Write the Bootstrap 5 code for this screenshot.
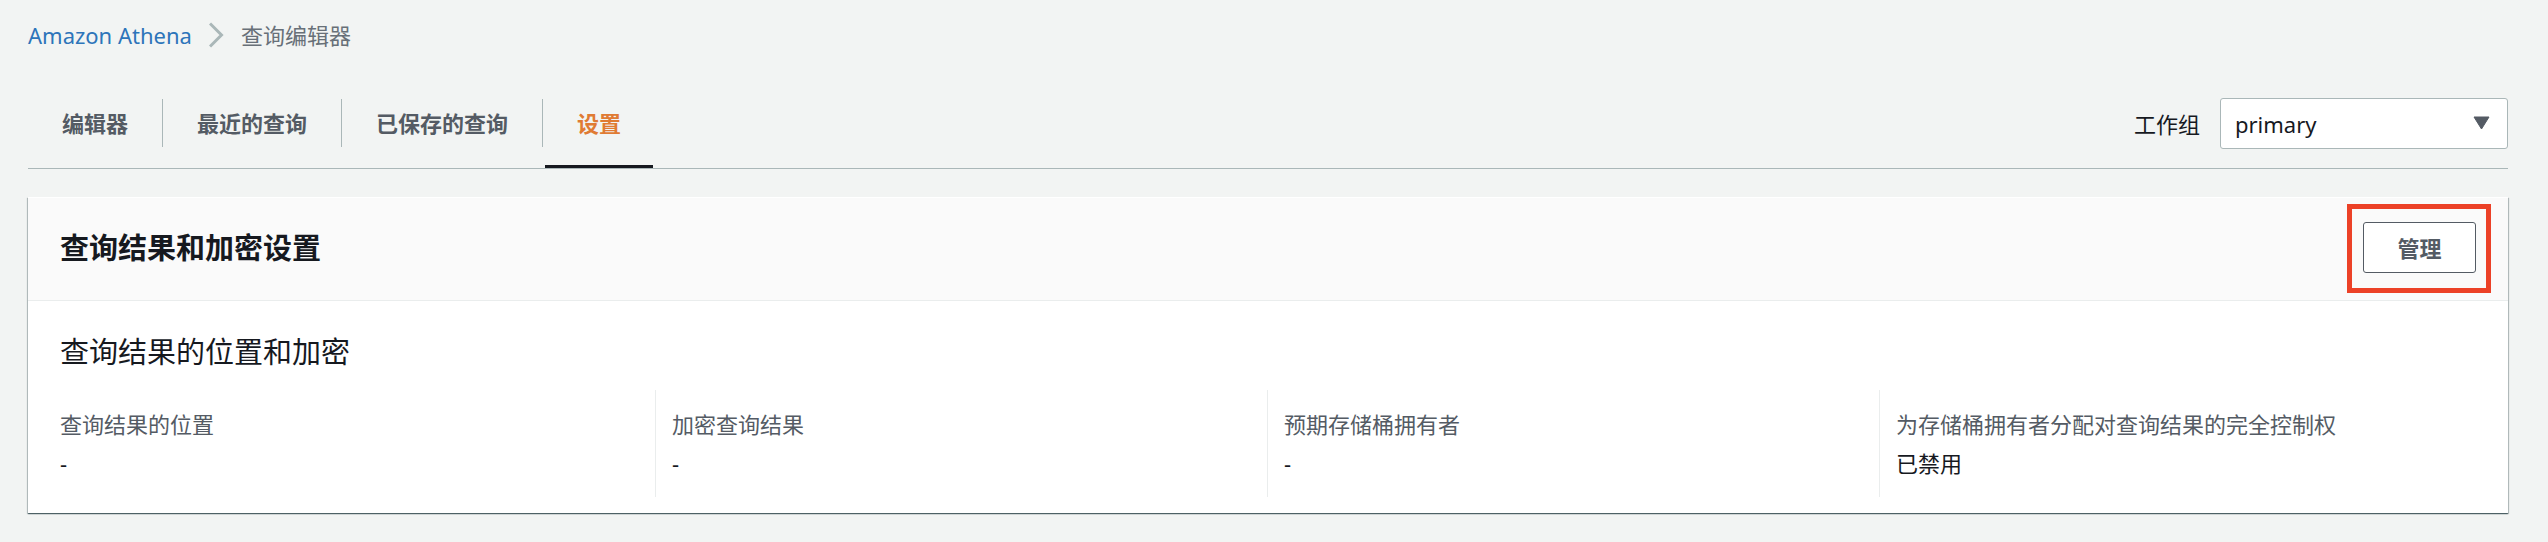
<!DOCTYPE html>
<html lang="zh-CN">
<head>
<meta charset="utf-8">
<meta name="viewport" content="width=device-width, initial-scale=1">
<title>Amazon Athena</title>
<link href="https://cdn.jsdelivr.net/npm/bootstrap@5.3.0/dist/css/bootstrap.min.css" rel="stylesheet">
<style>
  body { background: #f2f4f3; color: #16191f; font-family: "Noto Sans", "Noto Sans CJK SC", sans-serif; font-size: 22px; line-height: 36px; }
  .page { padding: 17px 40px 28px 28px; }
  .crumbs { gap: 17px; }
  .crumbs a { color: #2d75ba; text-decoration: none; }
  .crumb-here { color: #687078; }
  .tabbar { height: 71px; margin-top: 45px; border-bottom: 1px solid #aab7b8; }
  .tabs { padding-top: 1px; }
  .tabs .nav-link { color: #545b64; font-weight: 700; height: 48px; line-height: 48px; padding: 0 34px; border-right: 1px solid #aab7b8; }
  .tabs .nav-link.active { color: #e07b33; height: 69px; margin-left: 2px; padding: 0 32px; border-right: 0; border-bottom: 3px solid #16191f; }
  .group-select { width: 288px; height: 51px; font-size: 22px; line-height: 36px; color: #16191f; padding: 0 40px 0 14px; border: 1px solid #aab7b8; border-radius: 3px; background: #fff; appearance: none; -webkit-appearance: none; }
  .caret { right: 18px; top: 18px; pointer-events: none; }
  .panel { margin-top: 28px; background: #fff; border-top: 1px solid #fff; box-shadow: 0 1px 1px rgba(0,28,36,.5), 1px 1px 1px rgba(0,28,36,.2), -1px 1px 1px rgba(0,28,36,.2); }
  .panel-head { background: #fafafa; border-bottom: 1px solid #eaeded; padding: 6px 17px 7px 32px; }
  .panel h2, .panel h3 { font-size: 29px; line-height: 36px; }
  .panel h2 { padding-bottom: 2px; }
  .highlight { border: 5px solid #ec4127; padding: 13px 10px 15px 11px; }
  .manage { width: 113px; height: 51px; font-size: 22px; line-height: 36px; font-weight: 700; color: #545b64; background: #fff; border: 1px solid #545b64; border-radius: 3px; padding: 0; }
  .panel-body { padding: 33px 16px 16px; }
  .fields { margin-top: 20px; }
  .field { padding: 16px; }
  .field:not(:last-child) { border-right: 1px solid #eaeded; }
  .field dt { color: #545b64; font-weight: 400; }
  .field dd { margin: 3px 0 0; }
</style>
</head>
<body>
<div class="page">
  <nav class="crumbs d-flex align-items-center" aria-label="breadcrumb">
    <a href="#">Amazon Athena</a>
    <svg width="15" height="26" viewBox="0 0 15 26" fill="none" stroke="#aab7b8" stroke-width="3" aria-hidden="true"><path d="M1 1.500L12.500 13L1 24.500"/></svg>
    <span class="crumb-here">查询编辑器</span>
  </nav>

  <div class="tabbar d-flex justify-content-between align-items-start">
    <nav class="tabs nav flex-nowrap align-items-start">
      <a class="nav-link" href="#">编辑器</a>
      <a class="nav-link" href="#">最近的查询</a>
      <a class="nav-link" href="#">已保存的查询</a>
      <a class="nav-link active" href="#" aria-current="page">设置</a>
    </nav>
    <div class="d-flex align-items-center">
      <label for="workgroup" class="me-3 pe-1">工作组</label>
      <div class="position-relative">
        <select id="workgroup" class="group-select d-block"><option>primary</option></select>
        <svg class="caret position-absolute" width="17" height="14" viewBox="0 0 17 14" aria-hidden="true"><path d="M1 1H16L8.500 13Z" fill="#545b64" stroke="#545b64" stroke-linejoin="round"/></svg>
      </div>
    </div>
  </div>

  <section class="panel">
    <div class="panel-head d-flex justify-content-between align-items-center">
      <h2 class="fw-bold mb-0">查询结果和加密设置</h2>
      <div class="highlight"><button type="button" class="manage d-block">管理</button></div>
    </div>
    <div class="panel-body">
      <h3 class="fw-normal mb-0 px-3">查询结果的位置和加密</h3>
      <dl class="fields row g-0 mb-0">
        <div class="field col-3"><dt>查询结果的位置</dt><dd>-</dd></div>
        <div class="field col-3"><dt>加密查询结果</dt><dd>-</dd></div>
        <div class="field col-3"><dt>预期存储桶拥有者</dt><dd>-</dd></div>
        <div class="field col-3"><dt>为存储桶拥有者分配对查询结果的完全控制权</dt><dd>已禁用</dd></div>
      </dl>
    </div>
  </section>
</div>
<script src="https://cdn.jsdelivr.net/npm/bootstrap@5.3.0/dist/js/bootstrap.bundle.min.js"></script>
</body>
</html>
